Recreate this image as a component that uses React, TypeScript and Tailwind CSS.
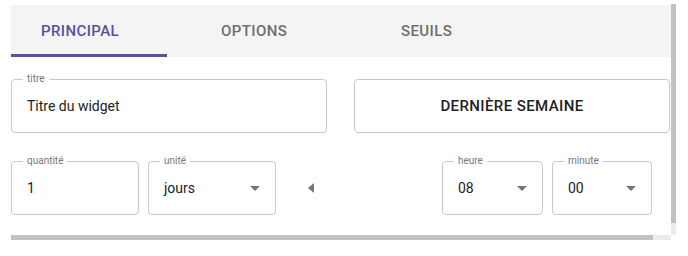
import { ReactNode } from "react";

function Field({
  label,
  width,
  children,
}: {
  label: string;
  width: string;
  children: ReactNode;
}) {
  return (
    <div className={`relative h-[54px] ${width} shrink-0 rounded-[4px] border border-[#c8c8c8] flex items-center`}>
      <span className="absolute left-[11px] top-[-8px] bg-white px-[4px] text-[10px] leading-[14px] text-[#777]">
        {label}
      </span>
      {children}
    </div>
  );
}

function DropArrow() {
  return (
    <svg width="10" height="5" viewBox="0 0 10 5" className="shrink-0">
      <path d="M0 0 L5 5 L10 0 Z" fill="#757575" />
    </svg>
  );
}

export default function App() {
  const tabs = ["PRINCIPAL", "OPTIONS", "SEUILS"];

  return (
    <main className="w-[688px] h-[256px] bg-white font-['Roboto','Liberation_Sans',sans-serif] overflow-hidden">
      <div className="ml-[11px] mt-[4px] w-[665px] h-[236px] flex">
        {/* contenu + barre horizontale */}
        <div className="w-[660px] flex flex-col">
          <div className="h-[231px] overflow-hidden">
            <div className="pt-[1px] w-[678px]">
              {/* onglets */}
              <div className="relative h-[52px] w-[660px] bg-[#f4f4f4] flex">
                {tabs.map((t, i) => (
                  <div
                    key={t}
                    className={`w-[180px] pl-[30px] flex items-center text-[15px] font-medium tracking-[0.4px] ${
                      i === 0 ? "text-[#5b4f9b]" : "text-[#6e6e6e]"
                    }`}
                  >
                    {t}
                  </div>
                ))}
                <div className="absolute left-0 bottom-0 h-[3px] w-[156px] bg-[#5b4f9b]" />
              </div>

              {/* ligne 1 */}
              <div className="mt-[22px] flex gap-[27px]">
                <Field label="titre" width="w-[316px]">
                  <span className="pl-[15px] text-[14px] text-[#222]">Titre du widget</span>
                </Field>
                <button className="h-[54px] w-[316px] rounded-[4px] border border-[#c8c8c8] text-[15px] font-medium tracking-[0.4px] text-[#222]">
                  DERNIÈRE SEMAINE
                </button>
              </div>

              {/* ligne 2 */}
              <div className="mt-[28px] flex items-center">
                <Field label="quantité" width="w-[128px]">
                  <span className="pl-[15px] text-[14px] text-[#222]">1</span>
                </Field>
                <div className="ml-[9px]">
                  <Field label="unité" width="w-[128px]">
                    <div className="w-full pl-[15px] pr-[15px] flex items-center justify-between">
                      <span className="text-[14px] text-[#222]">jours</span>
                      <DropArrow />
                    </div>
                  </Field>
                </div>
                <div className="ml-[32px] w-[134px]">
                  <svg width="6" height="10" viewBox="0 0 6 10">
                    <path d="M6 0 L0 5 L6 10 Z" fill="#757575" />
                  </svg>
                </div>
                <Field label="heure" width="w-[101px]">
                  <div className="w-full pl-[15px] pr-[15px] flex items-center justify-between">
                    <span className="text-[14px] text-[#222]">08</span>
                    <DropArrow />
                  </div>
                </Field>
                <div className="ml-[9px]">
                  <Field label="minute" width="w-[100px]">
                    <div className="w-full pl-[15px] pr-[15px] flex items-center justify-between">
                      <span className="text-[14px] text-[#222]">00</span>
                      <DropArrow />
                    </div>
                  </Field>
                </div>
              </div>
            </div>
          </div>
          {/* barre horizontale */}
          <div className="h-[5px] flex">
            <div className="w-[642px] bg-[#c1c1c1]" />
            <div className="flex-1 bg-[#e8ebf0]" />
          </div>
        </div>
        {/* barre verticale */}
        <div className="w-[5px] flex flex-col">
          <div className="h-[219px] bg-[#c1c1c1]" />
          <div className="h-[12px] bg-[#e8ebf0]" />
        </div>
      </div>
    </main>
  );
}
